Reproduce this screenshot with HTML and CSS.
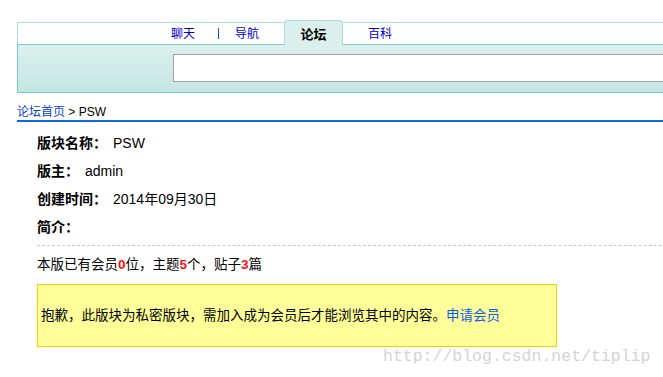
FILE: index.html
```html
<!DOCTYPE html>
<html>
<head>
    <meta charset="utf-8">
    <title>论坛 - PSW</title>
    <link rel="stylesheet" href="styles.css">
</head>
<body>
    <div class="page">
        <div class="header">
            <div class="nav">
                <a class="nav-link first" href="#">聊天</a>
                <span class="nav-sep"></span>
                <a class="nav-link after-sep" href="#">导航</a>
                <a class="nav-tab" href="#">论坛</a>
                <a class="nav-link after-tab" href="#">百科</a>
            </div>
            <div class="search-band">
                <input type="text" class="search-box">
            </div>
        </div>

        <div class="crumbs"><a href="#">论坛首页</a> &gt; PSW</div>

        <div class="board">
            <p class="info"><b>版块名称：</b>PSW</p>
            <p class="info"><b>版主：</b>admin</p>
            <p class="info"><b>创建时间：</b>2014年09月30日</p>
            <p class="info"><b>简介：</b></p>

            <p class="stats">本版已有会员<b class="num">0</b>位，主题<b class="num">5</b>个，贴子<b class="num">3</b>篇</p>

            <div class="notice">抱歉，此版块为私密版块，需加入成为会员后才能浏览其中的内容。<a href="#">申请会员</a></div>
        </div>

        <div class="watermark">http://blog.csdn.net/tiplip</div>
    </div>
</body>
</html>
```

FILE: styles.css
```css
html, body {
    margin: 0;
    overflow: hidden;
    background-color: white;
}

.page {
    position: relative;
    box-sizing: border-box;
    height: 377px;
    padding: 22px 0 0 17px;
    overflow: hidden;
    font-family: "Liberation Sans", "Noto Sans CJK SC", sans-serif;
    color: black;
}

a {
    text-decoration: none;
}

/* header and breadcrumb run on past the right edge */
.header,
.crumbs,
.board {
    width: 700px;
}

/* top tabs */
.nav {
    display: flex;
    align-items: center;
    height: 21px;
    padding-left: 153px;
    border: 1px solid #a9ddd7;
    border-bottom-color: #7fcfc6;
    font-size: 12px;
}

.nav-link {
    color: #0000d0;
    line-height: 14px;
}

.nav-link.after-sep {
    margin-left: 16px;
}

.nav-link.after-tab {
    margin-left: 25px;
}

.nav-sep {
    width: 1px;
    height: 11px;
    margin-left: 23px;
    background-color: #1a4fd8;
}

.nav-tab {
    position: relative;
    align-self: stretch;
    display: flex;
    align-items: center;
    justify-content: center;
    width: 59px;
    box-sizing: border-box;
    margin: -3px 0 -1px 25px;
    padding-top: 1px;
    border: 1px solid #a9ddd7;
    border-bottom: none;
    border-radius: 4px 4px 0 0;
    background-color: #dbf0ed;
    color: black;
    font-weight: bold;
    font-size: 13px;
}

/* search band */
.search-band {
    padding: 9px 0 10px 155px;
    border: 1px solid #74ccc3;
    border-top: none;
    background: linear-gradient(#dbf0ed, #c4e6e2);
}

.search-box {
    display: block;
    width: 540px;
    height: 28px;
    box-sizing: border-box;
    margin: 0;
    border: 1px solid #a3a3a3;
    background-color: white;
}

/* breadcrumb */
.crumbs {
    padding: 12px 0 1px;
    line-height: 14px;
    font-size: 12px;
    border-bottom: 2px solid #0d6ae4;
}

.crumbs a {
    color: #0a3fd0;
}

/* board info */
.board {
    padding: 7px 0 0 20px;
}

.info {
    margin: 0;
    line-height: 28px;
    font-size: 14px;
}

.info b {
    margin-right: 6px;
}

.stats {
    margin: 4px 0 0;
    padding-top: 9px;
    line-height: 20px;
    font-size: 13.5px;
    border-top: 1px dashed #c8c8c8;
}

.num {
    color: #ff1010;
}

.notice {
    width: 520px;
    box-sizing: border-box;
    margin-top: 9px;
    padding: 21px 3px 20px;
    line-height: 20px;
    font-size: 13.5px;
    border: 1px solid #ffcc00;
    background-color: #ffff99;
}

.notice a {
    color: #0a5cf0;
}

.watermark {
    position: absolute;
    left: 383px;
    top: 347px;
    line-height: 20px;
    font-family: "Liberation Mono", monospace;
    font-size: 16.5px;
    color: #d4d4d4;
}
```
